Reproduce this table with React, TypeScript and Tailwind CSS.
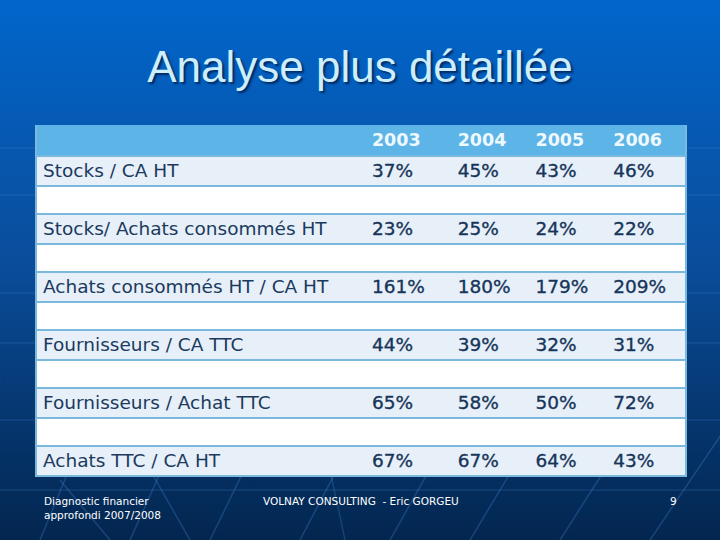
import React from 'react';

// Ratio table for the slide
const years = ['2003', '2004', '2005', '2006'];

const ratios = [
  { label: 'Stocks / CA HT', values: ['37%', '45%', '43%', '46%'] },
  { label: 'Stocks/ Achats consommés HT', values: ['23%', '25%', '24%', '22%'] },
  { label: 'Achats consommés HT / CA HT', values: ['161%', '180%', '179%', '209%'] },
  { label: 'Fournisseurs / CA TTC', values: ['44%', '39%', '32%', '31%'] },
  { label: 'Fournisseurs / Achat TTC', values: ['65%', '58%', '50%', '72%'] },
  { label: 'Achats TTC / CA HT', values: ['67%', '67%', '64%', '43%'] },
];

const colWidths = ['w-[86px]', 'w-[78px]', 'w-[78px]', 'w-[80px]'];

function BackgroundLines() {
  // faint perspective grid of the slide template
  const hLines = [148, 195, 293, 343, 420, 490];
  const bottom = [-60, 40, 130, 210, 300, 390, 470, 560, 650, 740];
  return (
    <svg className="absolute inset-0 pointer-events-none" width="720" height="540" viewBox="0 0 720 540">
      {hLines.map((y) => (
        <line key={y} x1="0" y1={y} x2="720" y2={y} stroke="#4d8fd6" strokeOpacity="0.2" strokeWidth="1.5" />
      ))}
      {bottom.map((x, i) => (
        <line
          key={x}
          x1={x}
          y1="540"
          x2={x + 60 + i * 6}
          y2="380"
          stroke="#3f7fc8"
          strokeOpacity="0.35"
          strokeWidth="1.5"
        />
      ))}
      <line x1="60" y1="480" x2="110" y2="540" stroke="#3f7fc8" strokeOpacity="0.35" strokeWidth="1.5" />
      <line x1="150" y1="470" x2="190" y2="540" stroke="#3f7fc8" strokeOpacity="0.35" strokeWidth="1.5" />
      <line x1="330" y1="470" x2="345" y2="540" stroke="#3f7fc8" strokeOpacity="0.3" strokeWidth="1.5" />
    </svg>
  );
}

export default function App() {
  return (
    <div className="relative w-[720px] h-[540px] overflow-hidden bg-gradient-to-b from-[#0066cc] via-[#0a4c99] to-[#03264f] font-['DejaVu_Sans',sans-serif]">
      <BackgroundLines />

      <div className="relative flex flex-col">
        {/* Title */}
        <h1 className="h-[125px] pt-[40px] text-center text-[44px] leading-[54px] text-[#cdeefc] font-['Liberation_Sans',Arial,sans-serif] [text-shadow:2px_2px_2px_rgba(0,20,60,0.7)]">
          Analyse plus détaillée
        </h1>

        {/* Table */}
        <div className="ml-[35px] w-[652px] border-2 border-t-0 border-[#7ab8de] bg-white text-[#1b3a5e] text-[18.5px]">
          <div className="flex h-[30px] items-center bg-[#5db4e6] text-[#eef8ff] font-bold text-[17.5px]">
            <div className="w-[328px]" />
            {years.map((y, i) => (
              <div key={y} className={`${colWidths[i]} pl-[8px]`}>
                {y}
              </div>
            ))}
          </div>
          {ratios.map((r, idx) => (
            <React.Fragment key={r.label}>
              {idx > 0 && <div className="h-[28px] border-t-2 border-[#7ab8de] bg-white" />}
              <div className="flex h-[30px] items-center border-t-2 border-[#7ab8de] bg-[#e7f0f9]">
                <div className="w-[328px] pl-[6px]">{r.label}</div>
                {r.values.map((v, i) => (
                  <div key={i} className={`${colWidths[i]} pl-[8px] text-[#173559] [-webkit-text-stroke:0.35px_#173559]`}>
                    {v}
                  </div>
                ))}
              </div>
            </React.Fragment>
          ))}
        </div>

        {/* Footer */}
        <div className="flex mt-[17px] pl-[44px] text-white text-[10.5px] leading-[14px]">
          <div className="w-[219px]">
            Diagnostic financier
            <br />
            approfondi 2007/2008
          </div>
          <div className="w-[407px] whitespace-pre">VOLNAY CONSULTING  - Eric GORGEU</div>
          <div>9</div>
        </div>
      </div>
    </div>
  );
}
